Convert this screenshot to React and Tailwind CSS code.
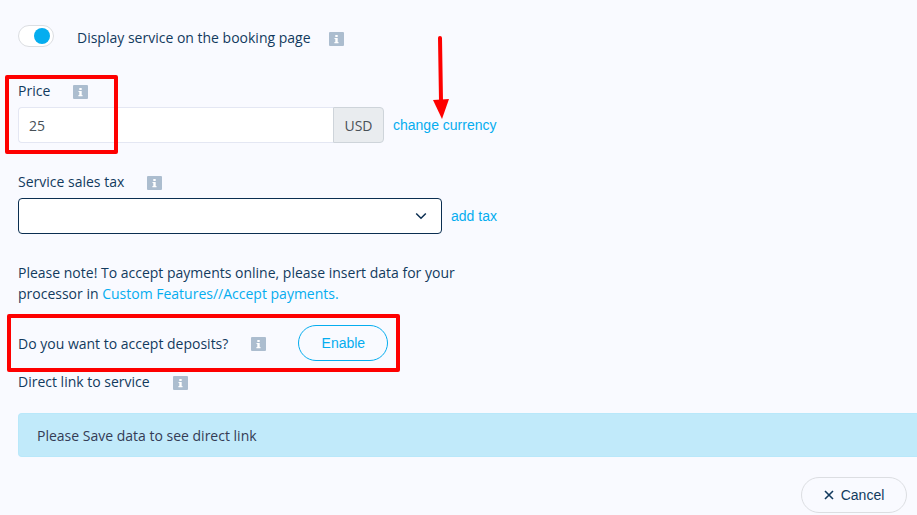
import { useState } from 'react'

function InfoIcon({ label }) {
  return (
    <button type="button" aria-label={label} className="block shrink-0 cursor-help pt-0.5">
      <svg width="15" height="14" viewBox="0 0 15 14" aria-hidden="true">
        <rect width="15" height="14" rx="1" fill="#acbdcf" />
        <path d="M6.3 3h2.4v2H6.3zM5.5 6h3.2v4h.8v1.2H5.4V10h.9V7.1h-.8z" fill="#fff" />
      </svg>
    </button>
  )
}

function ChevronIcon() {
  return (
    <svg width="12" height="8" viewBox="0 0 12 8" fill="none" aria-hidden="true">
      <path d="M1.2 1.5 6 6.2l4.8-4.7" stroke="#0b2e51" strokeWidth="1.5" />
    </svg>
  )
}

function CloseIcon() {
  return (
    <svg width="10" height="10" viewBox="0 0 10 10" fill="none" aria-hidden="true">
      <path d="m1 1 8 8M9 1 1 9" stroke="#123a5e" strokeWidth="1.6" />
    </svg>
  )
}

export default function App() {
  const [visible, setVisible] = useState(true)
  const [price, setPrice] = useState('25')
  const [tax, setTax] = useState('')

  return (
    <main className="min-h-screen bg-[#f9faff] pt-[25px] pl-[18px] font-['Open_Sans',sans-serif] text-sm leading-[21px] text-[#123a5e]">
      {/* Visibility */}
      <div className="flex items-start">
        <input
          type="checkbox"
          role="switch"
          id="visible"
          checked={visible}
          onChange={(e) => setVisible(e.target.checked)}
          className="flex h-[22px] w-9 shrink-0 cursor-pointer appearance-none items-center rounded-full border border-[#dcdee2] bg-white px-[3px] before:block before:size-4 before:rounded-full before:bg-[#b5c1cd] checked:justify-end checked:before:bg-[#05adef]"
        />
        <div className="flex items-center gap-[18px] pt-0.5 pl-[23px]">
          <label htmlFor="visible">Display service on the booking page</label>
          <InfoIcon label="About service visibility" />
        </div>
      </div>

      {/* Price */}
      <section className="relative mt-8">
        <div className="flex items-center gap-[23px]">
          <label htmlFor="price">Price</label>
          <InfoIcon label="About price" />
        </div>
        <div className="mt-1.5 flex items-center gap-[9px]">
          <div className="flex h-9 w-full max-w-[366px]">
            <input
              id="price"
              type="text"
              value={price}
              onChange={(e) => setPrice(e.target.value)}
              className="min-w-0 flex-1 rounded-l border border-r-0 border-[#e4e7f3] bg-white px-2.5 text-[#495057] outline-none"
            />
            <span className="flex w-[51px] items-center justify-center rounded-r border border-[#ced4da] bg-[#e9ecef] text-[#495057]">
              USD
            </span>
          </div>
          <a href="#currency" className="font-['Liberation_Sans',sans-serif] whitespace-nowrap text-[#05adef]">
            change currency
          </a>
        </div>
        <span className="pointer-events-none absolute -top-[5px] -left-[13px] h-[79px] w-[113px] rounded-xs border-4 border-[#fe0000]" />
        <svg
          className="pointer-events-none absolute -top-[45px] left-[414px]"
          width="18"
          height="86"
          viewBox="0 0 18 86"
          aria-hidden="true"
        >
          <path d="M8 3l1 63" stroke="#fe0000" strokeWidth="4" strokeLinecap="round" />
          <path d="M1 65l16-1-7 20z" fill="#fe0000" />
        </svg>
      </section>

      {/* Sales tax */}
      <section className="mt-7">
        <div className="flex items-center gap-[23px]">
          <label htmlFor="tax">Service sales tax</label>
          <InfoIcon label="About sales tax" />
        </div>
        <div className="mt-1.5 flex items-center gap-[9px]">
          <div className="grid h-9 w-full max-w-[424px] items-center">
            <select
              id="tax"
              value={tax}
              onChange={(e) => setTax(e.target.value)}
              className="col-start-1 row-start-1 h-9 w-full appearance-none rounded border border-[#0b2e51] bg-white px-2.5 outline-none"
            >
              <option value=""></option>
            </select>
            <span className="pointer-events-none col-start-1 row-start-1 mr-[15px] justify-self-end">
              <ChevronIcon />
            </span>
          </div>
          <a href="#tax" className="font-['Liberation_Sans',sans-serif] whitespace-nowrap text-[#05adef]">
            add tax
          </a>
        </div>
      </section>

      <p className="mt-7 max-w-[450px]">
        Please note! To accept payments online, please insert data for your processor in{' '}
        <a href="#payments" className="text-[#05adef]">
          Custom Features//Accept payments.
        </a>
      </p>

      {/* Deposits */}
      <section className="relative mt-[21px] flex items-center">
        <span>Do you want to accept deposits?</span>
        <div className="flex items-center gap-8 pl-[23px]">
          <InfoIcon label="About deposits" />
          <button
            type="button"
            className="h-9 w-[90px] cursor-pointer rounded-full border border-[#05adef] font-['Liberation_Sans',sans-serif] text-[#05adef]"
          >
            Enable
          </button>
        </div>
        <span className="pointer-events-none absolute -top-[11px] -left-[11px] h-[58px] w-[393px] rounded-xs border-4 border-[#fe0000]" />
      </section>

      {/* Direct link */}
      <section className="mt-2.5">
        <div className="flex items-center gap-[23px]">
          <span>Direct link to service</span>
          <InfoIcon label="About direct link" />
        </div>
        <div className="mt-[21px] flex h-11 items-center rounded-l border border-r-0 border-[#b9e8fa] bg-[#c1eafa] px-[18px] text-[#343c55]">
          Please Save data to see direct link
        </div>
      </section>

      <footer className="mt-5 flex justify-end pr-2.5">
        <button
          type="button"
          className="flex h-9 w-[106px] cursor-pointer items-center justify-center gap-[7px] rounded-full border border-[#dcdee2] font-['Liberation_Sans',sans-serif]"
        >
          <CloseIcon />
          Cancel
        </button>
      </footer>
    </main>
  )
}
